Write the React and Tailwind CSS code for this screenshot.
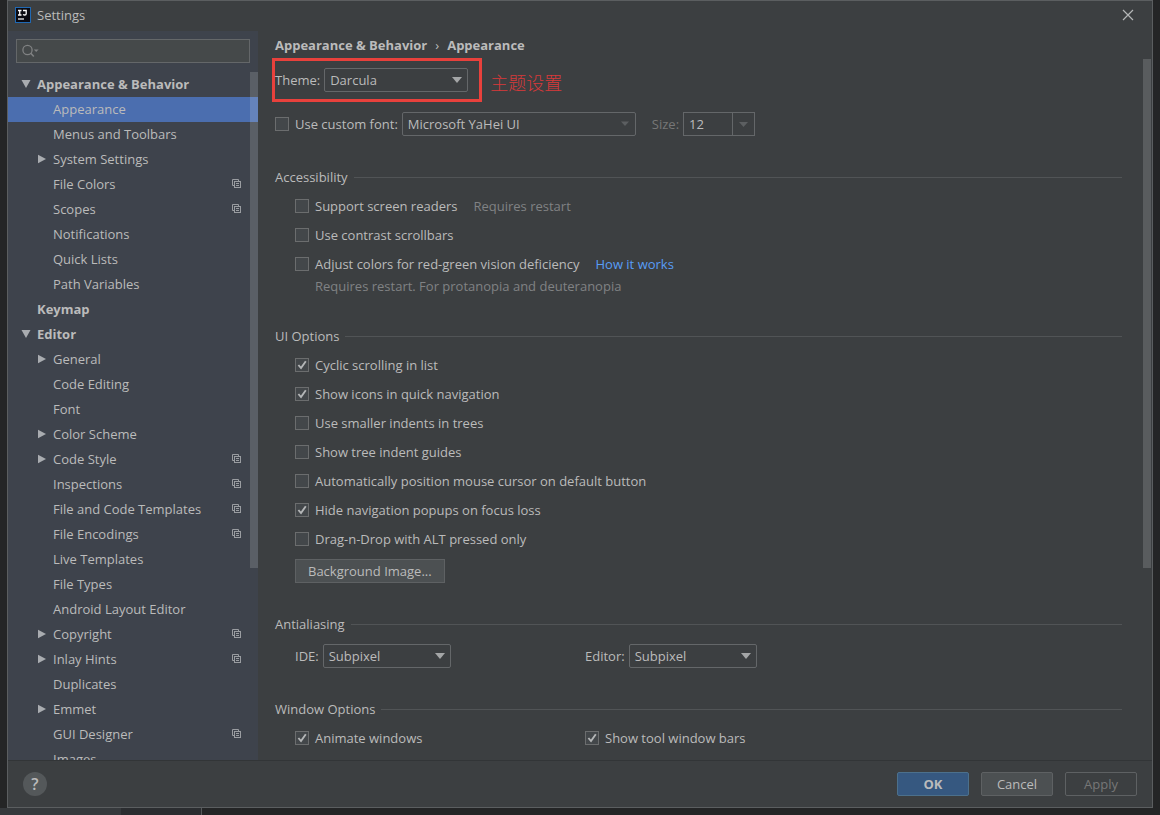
import { useState } from "react";

const FONT = "font-['Open_Sans','Noto_Sans_CJK_SC',sans-serif]";

// ==========================================
// Sidebar tree
// ==========================================
const treeItems = [
  { label: "Appearance & Behavior", level: 0, arrow: "down" },
  { label: "Appearance", level: 1 },
  { label: "Menus and Toolbars", level: 1 },
  { label: "System Settings", level: 1, arrow: "right" },
  { label: "File Colors", level: 1, project: true },
  { label: "Scopes", level: 1, project: true },
  { label: "Notifications", level: 1 },
  { label: "Quick Lists", level: 1 },
  { label: "Path Variables", level: 1 },
  { label: "Keymap", level: 0 },
  { label: "Editor", level: 0, arrow: "down" },
  { label: "General", level: 1, arrow: "right" },
  { label: "Code Editing", level: 1 },
  { label: "Font", level: 1 },
  { label: "Color Scheme", level: 1, arrow: "right" },
  { label: "Code Style", level: 1, arrow: "right", project: true },
  { label: "Inspections", level: 1, project: true },
  { label: "File and Code Templates", level: 1, project: true },
  { label: "File Encodings", level: 1, project: true },
  { label: "Live Templates", level: 1 },
  { label: "File Types", level: 1 },
  { label: "Android Layout Editor", level: 1 },
  { label: "Copyright", level: 1, arrow: "right", project: true },
  { label: "Inlay Hints", level: 1, arrow: "right", project: true },
  { label: "Duplicates", level: 1 },
  { label: "Emmet", level: 1, arrow: "right" },
  { label: "GUI Designer", level: 1, project: true },
  { label: "Images", level: 1 },
];

const uiOptions = [
  { label: "Cyclic scrolling in list", checked: true },
  { label: "Show icons in quick navigation", checked: true },
  { label: "Use smaller indents in trees", checked: false },
  { label: "Show tree indent guides", checked: false },
  { label: "Automatically position mouse cursor on default button", checked: false },
  { label: "Hide navigation popups on focus loss", checked: true },
  { label: "Drag-n-Drop with ALT pressed only", checked: false },
];

const LogoIcon = () => (
  <svg width="16" height="16" viewBox="0 0 16 16" aria-hidden="true">
    <rect width="16" height="16" fill="#2069b4" />
    <rect x="1" y="1" width="14" height="14" fill="#0b0b12" />
    <path
      d="M3 3.500h3.500M4.750 3.500v4.500M3 8h3.500M8 3.500h3.200v3.200q0 1.300-1.400 1.300-1 0-1.800-.6"
      fill="none"
      stroke="#fff"
      strokeWidth="1.3"
    />
    <rect x="3" y="11.4" width="6" height="1.2" fill="#fff" />
  </svg>
);

const SearchIcon = () => (
  <svg width="18" height="14" viewBox="0 0 18 14" aria-hidden="true">
    <circle cx="5.5" cy="6" r="4.6" fill="none" stroke="#808283" strokeWidth="1.3" />
    <path d="M8.8 9.300l3 3.200" stroke="#808283" strokeWidth="1.6" />
    <path d="M11.8 5.500h4.800l-2.400 2.600z" fill="#808283" />
  </svg>
);

const ProjectIcon = () => (
  <svg width="10" height="10" viewBox="0 0 10 10" fill="none" stroke="#9a9da1" aria-hidden="true">
    <path d="M2.5 6.500h-2v-6h6v2" />
    <rect x="2.5" y="2.5" width="6" height="6" />
    <path d="M4 4.500h3M4 6.500h3" />
  </svg>
);

const TreeArrow = ({ dir }) => (
  <svg width="10" height="10" viewBox="0 0 10 10" fill="#a9acb0" aria-hidden="true">
    {dir === "down" ? <path d="M0.5 1h9L5 9z" /> : <path d="M1 0.8v8.400L9 5z" />}
  </svg>
);

const Checkbox = ({ label, defaultChecked = false }) => {
  const [checked, setChecked] = useState(defaultChecked);
  return (
    <label className="flex h-[29px] items-center gap-1.5">
      <span className="relative flex">
        <input
          type="checkbox"
          checked={checked}
          onChange={(e) => setChecked(e.target.checked)}
          className="size-3.5 appearance-none border border-[#6b6d6e] bg-[#43474a]"
        />
        {checked && (
          <svg
            className="pointer-events-none absolute inset-0"
            width="14"
            height="14"
            viewBox="0 0 14 14"
            aria-hidden="true"
          >
            <path d="M3.4 7l2.6 3 4.8-6.800" fill="none" stroke="#b4b6b7" strokeWidth="1.9" />
          </svg>
        )}
      </span>
      <span>{label}</span>
    </label>
  );
};

const Select = ({ id, value, className, dim }) => (
  <span className={`relative flex h-6 ${className}`}>
    <select
      id={id}
      defaultValue={value}
      className="h-6 w-full appearance-none rounded-[2px] border border-[#646769] bg-[#3c3f41] px-[5px] leading-5 text-[#bbbbbb]"
    >
      <option>{value}</option>
    </select>
    <svg
      className="pointer-events-none absolute top-[9px] right-1.5"
      width="10"
      height="6"
      viewBox="0 0 10 6"
      fill={dim ? "#5c5f61" : "#a4a6a7"}
      aria-hidden="true"
    >
      <path d={dim ? "M1 0.500h8L5 5z" : "M0 0h10L5 6z"} />
    </svg>
  </span>
);

const SectionTitle = ({ children }) => (
  <div className="flex h-5 items-center gap-1.5">
    <h2>{children}</h2>
    <div className="h-px flex-1 bg-[#515456]" />
  </div>
);

const Sidebar = () => {
  const [selected, setSelected] = useState("Appearance");

  return (
    <aside className="flex w-[250px] shrink-0 flex-col bg-[#3e434c]">
      <div className="mx-2 mt-2 flex h-6 items-center border border-[#646769] bg-[#45494a] pl-[5px]">
        <SearchIcon />
        <input type="text" aria-label="Search settings" className="min-w-0 flex-1 bg-transparent px-1 outline-none" />
      </div>
      <div className="relative mt-[9px] min-h-0 flex-1 overflow-hidden">
        <ul>
          {treeItems.map((item) => (
            <li key={item.label}>
              <button
                type="button"
                onClick={() => setSelected(item.label)}
                className={`flex h-[25px] w-full items-center gap-1.5 pr-4 pb-0.5 text-left ${
                  item.level === 0 ? "pl-[13px] font-bold" : "pl-[29px]"
                } ${selected === item.label ? "bg-[#4b6eaf]" : ""}`}
              >
                <span className="w-2.5 shrink-0">{item.arrow && <TreeArrow dir={item.arrow} />}</span>
                <span className="flex-1">{item.label}</span>
                {item.project && <ProjectIcon />}
              </button>
            </li>
          ))}
        </ul>
        <div className="absolute top-0 right-0 h-[496px] w-2 bg-white/15" />
      </div>
    </aside>
  );
};

const App = () => {
  return (
    <div className={`flex h-screen flex-col bg-[#242526] px-[7px] text-[13px] leading-5 text-[#bbbbbb] ${FONT}`}>
      <div className="flex min-h-0 flex-1 flex-col border border-[#5b5e60] bg-[#3c3f41]">
        {/* Title bar */}
        <header className="flex h-[30px] shrink-0 items-center gap-1.5 pr-[18px] pb-0.5 pl-[7px]">
          <LogoIcon />
          <h1 className="flex-1">Settings</h1>
          <button type="button" aria-label="Close">
            <svg width="12" height="12" viewBox="0 0 12 12" stroke="#b4b6b7" strokeWidth="1.2" aria-hidden="true">
              <path d="M1 1l10 10M11 1L1 11" />
            </svg>
          </button>
        </header>

        <div className="flex min-h-0 flex-1">
          <Sidebar />

          {/* Settings page */}
          <main className="relative min-w-0 flex-1 overflow-hidden pr-[30px] pl-[17px]">
            <nav className="mt-1 flex h-5 items-center gap-2 font-bold">
              <span>Appearance & Behavior</span>
              <span className="font-normal">›</span>
              <span>Appearance</span>
            </nav>

            <div className="mt-[3px] -ml-[3px] flex items-center gap-2">
              <div className="flex h-11 items-center gap-1 border-3 border-[#e8413c] pr-[11px]">
                <label htmlFor="theme">Theme:</label>
                <Select id="theme" value="Darcula" className="w-36" />
              </div>
              <span className="pt-1 font-['Noto_Sans_CJK_SC',sans-serif] text-lg font-light text-[#d8393a]">主题设置</span>
            </div>

            <div className="mt-[7px] flex h-[29px] items-center">
              <Checkbox label="Use custom font:" />
              <Select id="font" value="Microsoft YaHei UI" className="ml-1 w-[234px]" dim />
              <label htmlFor="size" className="ml-4 text-[#777777]">
                Size:
              </label>
              <span className="relative ml-1 flex">
                <input
                  id="size"
                  type="text"
                  defaultValue="12"
                  className="h-6 w-[72px] border border-[#646769] bg-transparent px-[5px] outline-none"
                />
                <svg
                  className="pointer-events-none absolute top-0 right-0"
                  width="23"
                  height="24"
                  viewBox="0 0 23 24"
                  aria-hidden="true"
                >
                  <path d="M.5 0v24" stroke="#646769" />
                  <path d="M7 10h9l-4.500 5z" fill="#5c5f61" />
                </svg>
              </span>
            </div>

            <section className="mt-[29px]">
              <SectionTitle>Accessibility</SectionTitle>
              <div className="mt-1 pl-5">
                <div className="flex items-center gap-4">
                  <Checkbox label="Support screen readers" />
                  <span className="text-[#808284]">Requires restart</span>
                </div>
                <Checkbox label="Use contrast scrollbars" />
                <div className="flex items-center gap-4">
                  <Checkbox label="Adjust colors for red-green vision deficiency" />
                  <a href="#how-it-works" className="text-[#589df6]">
                    How it works
                  </a>
                </div>
                <p className="-mt-px pl-5 leading-[18px] text-[#808284]">
                  Requires restart. For protanopia and deuteranopia
                </p>
              </div>
            </section>

            <section className="mt-[31px]">
              <SectionTitle>UI Options</SectionTitle>
              <div className="mt-1 pl-5">
                {uiOptions.map((opt) => (
                  <Checkbox key={opt.label} label={opt.label} defaultChecked={opt.checked} />
                ))}
                <button type="button" className="mt-1.5 h-6 border border-[#5e6163] bg-[#4c5052] px-3">
                  Background Image...
                </button>
              </div>
            </section>

            <section className="mt-[31px]">
              <SectionTitle>Antialiasing</SectionTitle>
              <div className="mt-2.5 flex pl-5">
                <div className="flex w-[290px] items-center gap-1">
                  <label htmlFor="aa-ide">IDE:</label>
                  <Select id="aa-ide" value="Subpixel" className="w-32" />
                </div>
                <div className="flex items-center gap-1">
                  <label htmlFor="aa-editor">Editor:</label>
                  <Select id="aa-editor" value="Subpixel" className="w-32" />
                </div>
              </div>
            </section>

            <section className="mt-[31px]">
              <SectionTitle>Window Options</SectionTitle>
              <div className="mt-1 flex pl-5">
                <div className="w-[290px]">
                  <Checkbox label="Animate windows" defaultChecked />
                </div>
                <Checkbox label="Show tool window bars" defaultChecked />
              </div>
            </section>

            <div className="absolute top-7 right-px h-[509px] w-2 bg-[#595c5e]" />
          </main>
        </div>

        {/* Footer buttons */}
        <footer className="flex h-[47px] shrink-0 items-center gap-3 border-t border-[#323537] pr-[15px] pl-[15px]">
          <button
            type="button"
            aria-label="Help"
            className="size-6 rounded-full bg-[#54585a] text-base leading-6 font-semibold"
          >
            ?
          </button>
          <div className="flex-1" />
          <button type="button" className="h-6 w-[72px] rounded-[2px] border border-[#4c708c] bg-[#365880] font-bold">
            OK
          </button>
          <button type="button" className="h-6 w-[72px] rounded-[2px] border border-[#5e6163] bg-[#4c5052]">
            Cancel
          </button>
          <button type="button" disabled className="h-6 w-[72px] rounded-[2px] border border-[#5e6163] text-[#777777]">
            Apply
          </button>
        </footer>
      </div>

      {/* Strip of the editor behind the dialog */}
      <div className="-ml-[7px] flex h-[7px] shrink-0">
        <div className="w-[121px] bg-[#36393c]" />
        <div className="w-[81px] border-r border-[#55585a] bg-[#2b2d30]" />
      </div>
    </div>
  );
};

export default App;
